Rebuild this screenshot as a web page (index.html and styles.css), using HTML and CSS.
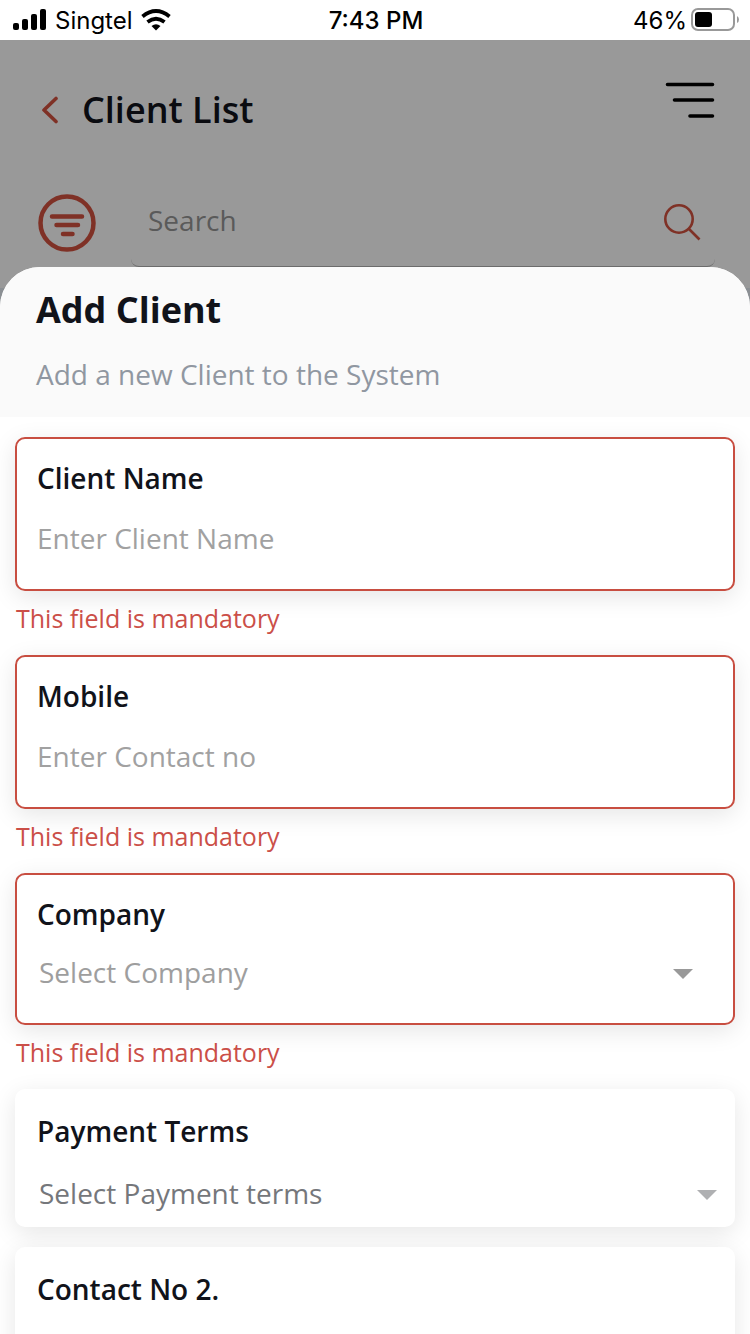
FILE: index.html
```html
<!DOCTYPE html>
<html lang="en">
<head>
<meta charset="utf-8">
<meta name="viewport" content="width=device-width, initial-scale=1">
<title>Add Client</title>
<link rel="stylesheet" href="styles.css">
</head>
<body>
<div class="app">
  <div class="status">
    <div class="status-left">
      <svg width="34" height="22" viewBox="0 0 34 22" aria-hidden="true">
        <rect x="0" y="14" width="6" height="7" rx="2"/>
        <rect x="9" y="10" width="6" height="11" rx="2"/>
        <rect x="18" y="5" width="6" height="16" rx="2"/>
        <rect x="27" y="0" width="6" height="21" rx="2"/>
      </svg>
      <span class="status-text">Singtel</span>
      <svg width="30" height="22" viewBox="0 0 30 22" aria-hidden="true">
        <path d="M15 21.500L10.500 17Q15 13.500 19.500 17Z"/>
        <path d="M6.500 13Q15 6.500 23.500 13M1.500 7.500Q15 -3.500 28.500 7.500" fill="none" stroke="#000" stroke-width="3.800"/>
      </svg>
    </div>
    <div class="status-time status-text">7:43 PM</div>
    <div class="status-right">
      <span class="status-text">46%</span>
      <svg width="48" height="24" viewBox="0 0 48 24" aria-hidden="true">
        <rect x="1" y="1" width="42" height="21" rx="6" fill="none" stroke="#999" stroke-width="2"/>
        <rect x="4" y="4" width="17" height="15" rx="3"/>
        <path d="M46 8Q48 9 48 11.500T46 15Z" fill="#999"/>
      </svg>
    </div>
  </div>

  <div class="backdrop">
    <header class="topbar">
      <button class="icon-button" type="button" aria-label="Back">
        <svg width="18" height="28" viewBox="0 0 18 28"><path d="M15 2.500L3 14L15 25.500" fill="none" stroke="#7f3126" stroke-width="3.600" stroke-linecap="round" stroke-linejoin="round"/></svg>
      </button>
      <h1 class="topbar-title">Client List</h1>
      <button class="icon-button menu-button" type="button" aria-label="Menu">
        <svg width="50" height="38" viewBox="0 0 50 38"><path d="M2.500 2.500H47.500M9.500 18H47.500M25 34H47.500" stroke="#000" stroke-width="3.600" stroke-linecap="round"/></svg>
      </button>
    </header>
    <div class="search-row">
      <button class="icon-button" type="button" aria-label="Filter">
        <svg width="58" height="60" viewBox="0 0 58 60" fill="none" stroke="#7f3126" stroke-linecap="round"><circle cx="29" cy="31" r="26.500" stroke-width="4.500"/><path d="M14 24.500H44M18.500 33H40M25 42H34.500" stroke-width="4.500"/></svg>
      </button>
      <div class="search-box">
        <input class="search-input" type="search" placeholder="Search" aria-label="Search">
        <svg width="38" height="38" viewBox="0 0 38 38" fill="none" stroke="#7f3126" stroke-width="2.600" aria-hidden="true"><circle cx="16" cy="16" r="13.700"/><path d="M26 26L36.500 36.500"/></svg>
      </div>
    </div>
  </div>

  <main class="sheet">
    <div class="sheet-head">
      <h2 class="sheet-title">Add Client</h2>
      <p class="sheet-subtitle">Add a new Client to the System</p>
    </div>
    <form class="form">
      <div class="card card-error">
        <label class="label" for="client-name">Client Name</label>
        <input class="control" id="client-name" type="text" placeholder="Enter Client Name">
      </div>
      <p class="error">This field is mandatory</p>

      <div class="card card-error">
        <label class="label" for="mobile">Mobile</label>
        <input class="control" id="mobile" type="tel" placeholder="Enter Contact no">
      </div>
      <p class="error">This field is mandatory</p>

      <div class="card card-error card-company">
        <label class="label" for="company">Company</label>
        <div class="select-row">
          <select class="control select" id="company"><option>Select Company</option></select>
          <svg class="arrow" width="20" height="14" viewBox="0 0 20 14" aria-hidden="true"><path d="M0 4H20L10 14Z"/></svg>
        </div>
      </div>
      <p class="error">This field is mandatory</p>

      <div class="card card-terms">
        <label class="label" for="terms">Payment Terms</label>
        <div class="select-row">
          <select class="control select" id="terms"><option>Select Payment terms</option></select>
          <svg class="arrow" width="20" height="14" viewBox="0 0 20 14" aria-hidden="true"><path d="M0 4H20L10 14Z"/></svg>
        </div>
      </div>

      <div class="card card-next">
        <label class="label" for="contact-2">Contact No 2.</label>
        <input class="control" id="contact-2" type="tel">
      </div>
    </form>
  </main>
</div>
</body>
</html>
```
FILE: styles.css
```css
* {
  box-sizing: border-box;
}

body {
  margin: 0;
  background: #fff;
  color: #11131a;
  font-family: "Open Sans", "Noto Sans", sans-serif;
  font-size: 28px;
}

h1, h2, p {
  margin: 0;
}

.app {
  display: flex;
  flex-direction: column;
  height: 100vh;
  overflow: hidden;
  background: linear-gradient(#8b8f93, #8b8f93) 0 288px / 100% 60px no-repeat;
}

.status {
  display: grid;
  grid-template-columns: 1fr auto 1fr;
  align-items: center;
  flex: none;
  height: 40px;
  padding: 0 11px 0 13px;
  background: #fff;
  color: #000;
  font-family: Inter, sans-serif;
  font-size: 24px;
  line-height: 38px;
}

.status-text {
  padding-top: 2px;
}

.status-left, .status-right {
  display: flex;
  align-items: center;
  gap: 8px;
}

.status-right {
  justify-content: flex-end;
  gap: 4px;
}

.status-time {
  font-weight: 500;
}

.backdrop {
  flex: none;
  height: 248px;
  background: #999;
}

.icon-button {
  display: flex;
  padding: 0;
  border: 0;
  background: none;
}

.topbar {
  display: flex;
  align-items: center;
  height: 137px;
  padding: 2px 35px 0 41px;
}

.topbar-title {
  margin-left: 23px;
  color: #0a0b10;
  font-size: 36px;
  font-weight: 600;
  line-height: 48px;
}

.menu-button {
  margin: 0 0 18px auto;
}

.search-row {
  display: flex;
  align-items: center;
  gap: 35px;
  height: 90px;
  padding: 0 35px 0 38px;
}

.search-box {
  display: flex;
  flex: 1;
  align-items: center;
  height: 90px;
  padding: 0 14px 0 17px;
  border-bottom: 1px solid #6c6c6c;
  border-radius: 8px;
}

.search-input {
  flex: 1;
  min-width: 0;
  padding: 0 0 4px;
  border: 0;
  background: none;
  font: inherit;
}

.search-input::placeholder {
  color: #5a5a5a;
  opacity: 1;
}

.sheet {
  flex: 1;
  min-height: 0;
  margin-top: -21px;
  overflow: hidden;
  border-radius: 40px 40px 0 0;
  background: #fff;
}

.sheet-head {
  height: 150px;
  padding: 18px 36px 0;
  background: #fafafa;
}

.sheet-title {
  font-size: 36px;
  font-weight: 700;
  line-height: 50px;
}

.sheet-subtitle {
  margin-top: 20px;
  color: #9097a1;
  line-height: 38px;
}

.form {
  padding: 20px 15px 0;
}

.card {
  display: flex;
  flex-direction: column;
  gap: 20px;
  padding: 19px 20px 31px;
  border: 2px solid transparent;
  border-radius: 10px;
  background: #fff;
  box-shadow: 0 6px 24px rgba(0, 0, 0, 0.1);
}

.card-error {
  border-color: #c84e41;
}

.card-company {
  gap: 18px;
}

.card-terms {
  gap: 22px;
  padding: 20px 20px 12px;
}

.card-next {
  margin-top: 20px;
  padding-top: 20px;
}

.label {
  font-weight: 600;
  line-height: 40px;
}

.control {
  width: 100%;
  height: 40px;
  padding: 0;
  border: 0;
  background: none;
  color: #9e9e9e;
  font: inherit;
}

.control::placeholder {
  color: #a1a1a1;
  opacity: 1;
}

.select-row {
  display: flex;
  align-items: center;
  padding-right: 20px;
}

.select {
  flex: 1;
  min-width: 0;
  padding-left: 2px;
  appearance: none;
}

.arrow {
  flex: none;
  fill: #999;
}

.card-terms .select-row {
  margin-right: -4px;
  padding-right: 0;
}

.card-terms .select {
  color: #75777b;
}

.card-terms .arrow {
  fill: #afb0b2;
}

.error {
  margin: 11px 1px 21px;
  color: #cb4f48;
  font-size: 25px;
  line-height: 32px;
}
```
